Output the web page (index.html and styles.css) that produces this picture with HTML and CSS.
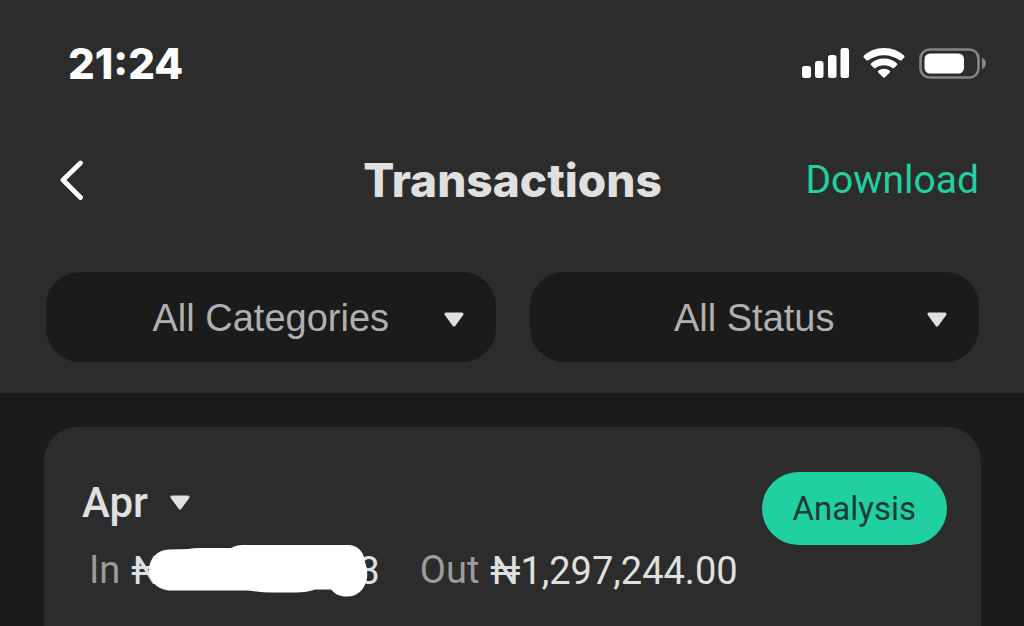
FILE: index.html
```
<!DOCTYPE html>
<html lang="en">
<head>
    <meta charset="UTF-8">
    <meta name="viewport" content="width=device-width, initial-scale=1.0">
    <title>Transactions</title>
    <link rel="stylesheet" href="styles.css">
</head>
<body>
    <header class="header">
        <div class="status-bar">
            <span class="clock">21:24</span>
            <div class="status-icons">
                <svg width="47" height="30" viewBox="0 0 47 30" fill="#fff">
                    <rect x="0" y="18" width="9" height="12" rx="2.500"/>
                    <rect x="13" y="13" width="8.500" height="17" rx="2.500"/>
                    <rect x="26" y="7" width="8.500" height="23" rx="2.500"/>
                    <rect x="38.500" y="0" width="8.500" height="30" rx="2.500"/>
                </svg>
                <svg width="42" height="30" viewBox="0 0 42 30" fill="#fff">
                    <path d="M21 0C29.3 0 36 3 41.2 7.8Q42 8.6 41.2 9.5L38.600 12.200Q37.700 13 36.800 12.200C32.300 9.200 27 7.200 21 7.200S9.700 9.200 5.200 12.200Q4.300 13 3.400 12.200L.8 9.500Q0 8.600 .8 7.800C6 3 12.700 0 21 0Z"/>
                    <path d="M21 10.500C26.200 10.500 30.500 12.300 34 15.400Q34.900 16.200 34 17.100L31.100 19.900Q30.300 20.700 29.400 19.900C27 18.300 24.200 17.200 21 17.200S15 18.300 12.600 19.900Q11.700 20.700 10.900 19.900L8 17.100Q7.100 16.200 8 15.400C11.500 12.300 15.800 10.500 21 10.500Z"/>
                    <path d="M21 20.700C23.200 20.700 25.200 21.400 26.800 22.800Q27.600 23.600 26.800 24.500L22 29.300Q21 30.200 20 29.300L15.200 24.500Q14.400 23.600 15.200 22.800C16.800 21.400 18.800 20.700 21 20.700Z"/>
                </svg>
                <svg width="67" height="31" viewBox="0 0 67 31">
                    <rect x="1.500" y="1.500" width="58" height="28" rx="9" fill="none" stroke="#858585" stroke-width="2.600"/>
                    <rect x="5.500" y="5.500" width="39.500" height="20" rx="5.500" fill="#fff"/>
                    <path d="M63 9.800C65.500 11 67 13 67 15.500S65.500 20 63 21.200Z" fill="#858585"/>
                </svg>
            </div>
        </div>

        <nav class="nav">
            <button type="button" class="back" aria-label="Back">
                <svg width="24" height="40" viewBox="0 0 24 40" fill="none" stroke="#fff" stroke-width="4.800" stroke-linecap="round" stroke-linejoin="round">
                    <path d="M20.500 3L3 20L20.500 37.500"/>
                </svg>
            </button>
            <h1 class="title">Transactions</h1>
            <a href="#" class="download">Download</a>
        </nav>

        <div class="filters">
            <div class="filter">
                <select class="filter-select" aria-label="Category">
                    <option>All Categories</option>
                </select>
                <svg class="arrow" width="20" height="15" viewBox="0 0 20 15">
                    <path d="M2 2H18L10 13Z"/>
                </svg>
            </div>
            <div class="filter">
                <select class="filter-select" aria-label="Status">
                    <option>All Status</option>
                </select>
                <svg class="arrow" width="20" height="15" viewBox="0 0 20 15">
                    <path d="M2 2H18L10 13Z"/>
                </svg>
            </div>
        </div>
    </header>

    <main class="content">
        <section class="card">
            <div class="card-top">
                <button type="button" class="month">
                    Apr
                    <svg class="arrow" width="20" height="15" viewBox="0 0 20 15">
                        <path d="M2 2H18L10 13Z"/>
                    </svg>
                </button>
                <button type="button" class="analysis">Analysis</button>
            </div>
            <div class="totals">
                <div class="total">
                    <span class="label">In</span>
                    <span class="amount">₦<svg class="mask" width="219" height="52" viewBox="0 0 219 52" fill="#fff">
                        <path d="M20 4.500L40 4Q44 3 52 3L82 3Q87 0 94 0H199C209 0 215 7 216 17Q219 24 218 33C216 44 209 51.500 198 51.500C190 51.500 186 49 182 44.500H166Q158 47.500 147 47.500H123Q112 47.500 99 45.500H22C9 45.500 0 36 0 25S8 5 20 4.500Z"/>
                    </svg>3</span>
                </div>
                <div class="total">
                    <span class="label">Out</span>
                    <span class="amount">₦1,297,244.00</span>
                </div>
            </div>
        </section>
    </main>
</body>
</html>
```
FILE: styles.css
```
* {
    padding: 0;
    margin: 0;
    box-sizing: border-box;
}

body {
    min-height: 100vh;
    display: flex;
    flex-direction: column;
    background-color: #1b1b1b;
    color: #e0e0e0;
    font-family: Roboto, sans-serif;
}

button,
select {
    border: none;
    background: none;
    color: inherit;
    font-family: inherit;
    cursor: pointer;
}

svg {
    display: block;
    flex: none;
}

.header {
    padding: 38px 38px 31px 46px;
    background-color: #2c2c2c;
}

.status-bar {
    display: flex;
    align-items: center;
    justify-content: space-between;
    height: 50px;
    padding-left: 22px;
}

.clock {
    font-family: Inter, sans-serif;
    font-size: 42px;
    font-weight: 800;
    color: #fff;
}

.status-icons {
    display: flex;
    align-items: center;
    gap: 14px;
}

.nav {
    display: grid;
    grid-template-columns: 1fr auto 1fr;
    align-items: center;
    height: 60px;
    margin: 62px 7px 62px 0;
}

.back {
    justify-self: start;
    padding: 0 14px;
}

.title {
    font-family: Inter, sans-serif;
    font-size: 46px;
    font-weight: 800;
}

.download {
    justify-self: end;
    font-size: 39px;
    color: #20d0a1;
    text-decoration: none;
}

.filters {
    display: grid;
    grid-template-columns: 1fr 1fr;
    gap: 34px;
    margin-right: 7px;
}

.filter {
    display: grid;
    align-items: center;
}

.filter > * {
    grid-area: 1 / 1;
}

.filter-select {
    appearance: none;
    width: 100%;
    height: 90px;
    padding-top: 2px;
    border-radius: 34px;
    background-color: #1b1b1b;
    color: #b0b0b0;
    font-family: "Liberation Sans", Arial, sans-serif;
    font-size: 38px;
    text-align: center;
    text-align-last: center;
}

.filter .arrow {
    justify-self: end;
    margin: 4px 32px 0 0;
    pointer-events: none;
}

.arrow {
    fill: #e0e0e0;
    stroke: #e0e0e0;
    stroke-width: 3;
    stroke-linejoin: round;
}

.content {
    flex: 1;
    display: flex;
    flex-direction: column;
    padding: 34px 43px 0 44px;
}

.card {
    flex: 1;
    padding: 45px 34px 0 38px;
    border-radius: 34px 34px 0 0;
    background-color: #2c2c2c;
}

.card-top {
    display: flex;
    align-items: flex-start;
    justify-content: space-between;
}

.month {
    display: flex;
    align-items: center;
    gap: 22px;
    height: 60px;
    font-size: 42px;
    font-weight: 500;
}

.analysis {
    height: 73px;
    padding: 0 31px;
    border-radius: 37px;
    background-color: #20d0a1;
    color: #1b3a31;
    font-size: 33px;
}

.totals {
    display: flex;
    gap: 40px;
    padding-left: 7px;
    font-size: 38px;
    line-height: 50px;
}

.total {
    display: flex;
    gap: 11px;
}

.label {
    color: #9c9c9c;
}

.amount {
    display: flex;
    align-items: center;
}

.mask {
    position: relative;
    margin: 0 -10px 0 -12px;
}
```
